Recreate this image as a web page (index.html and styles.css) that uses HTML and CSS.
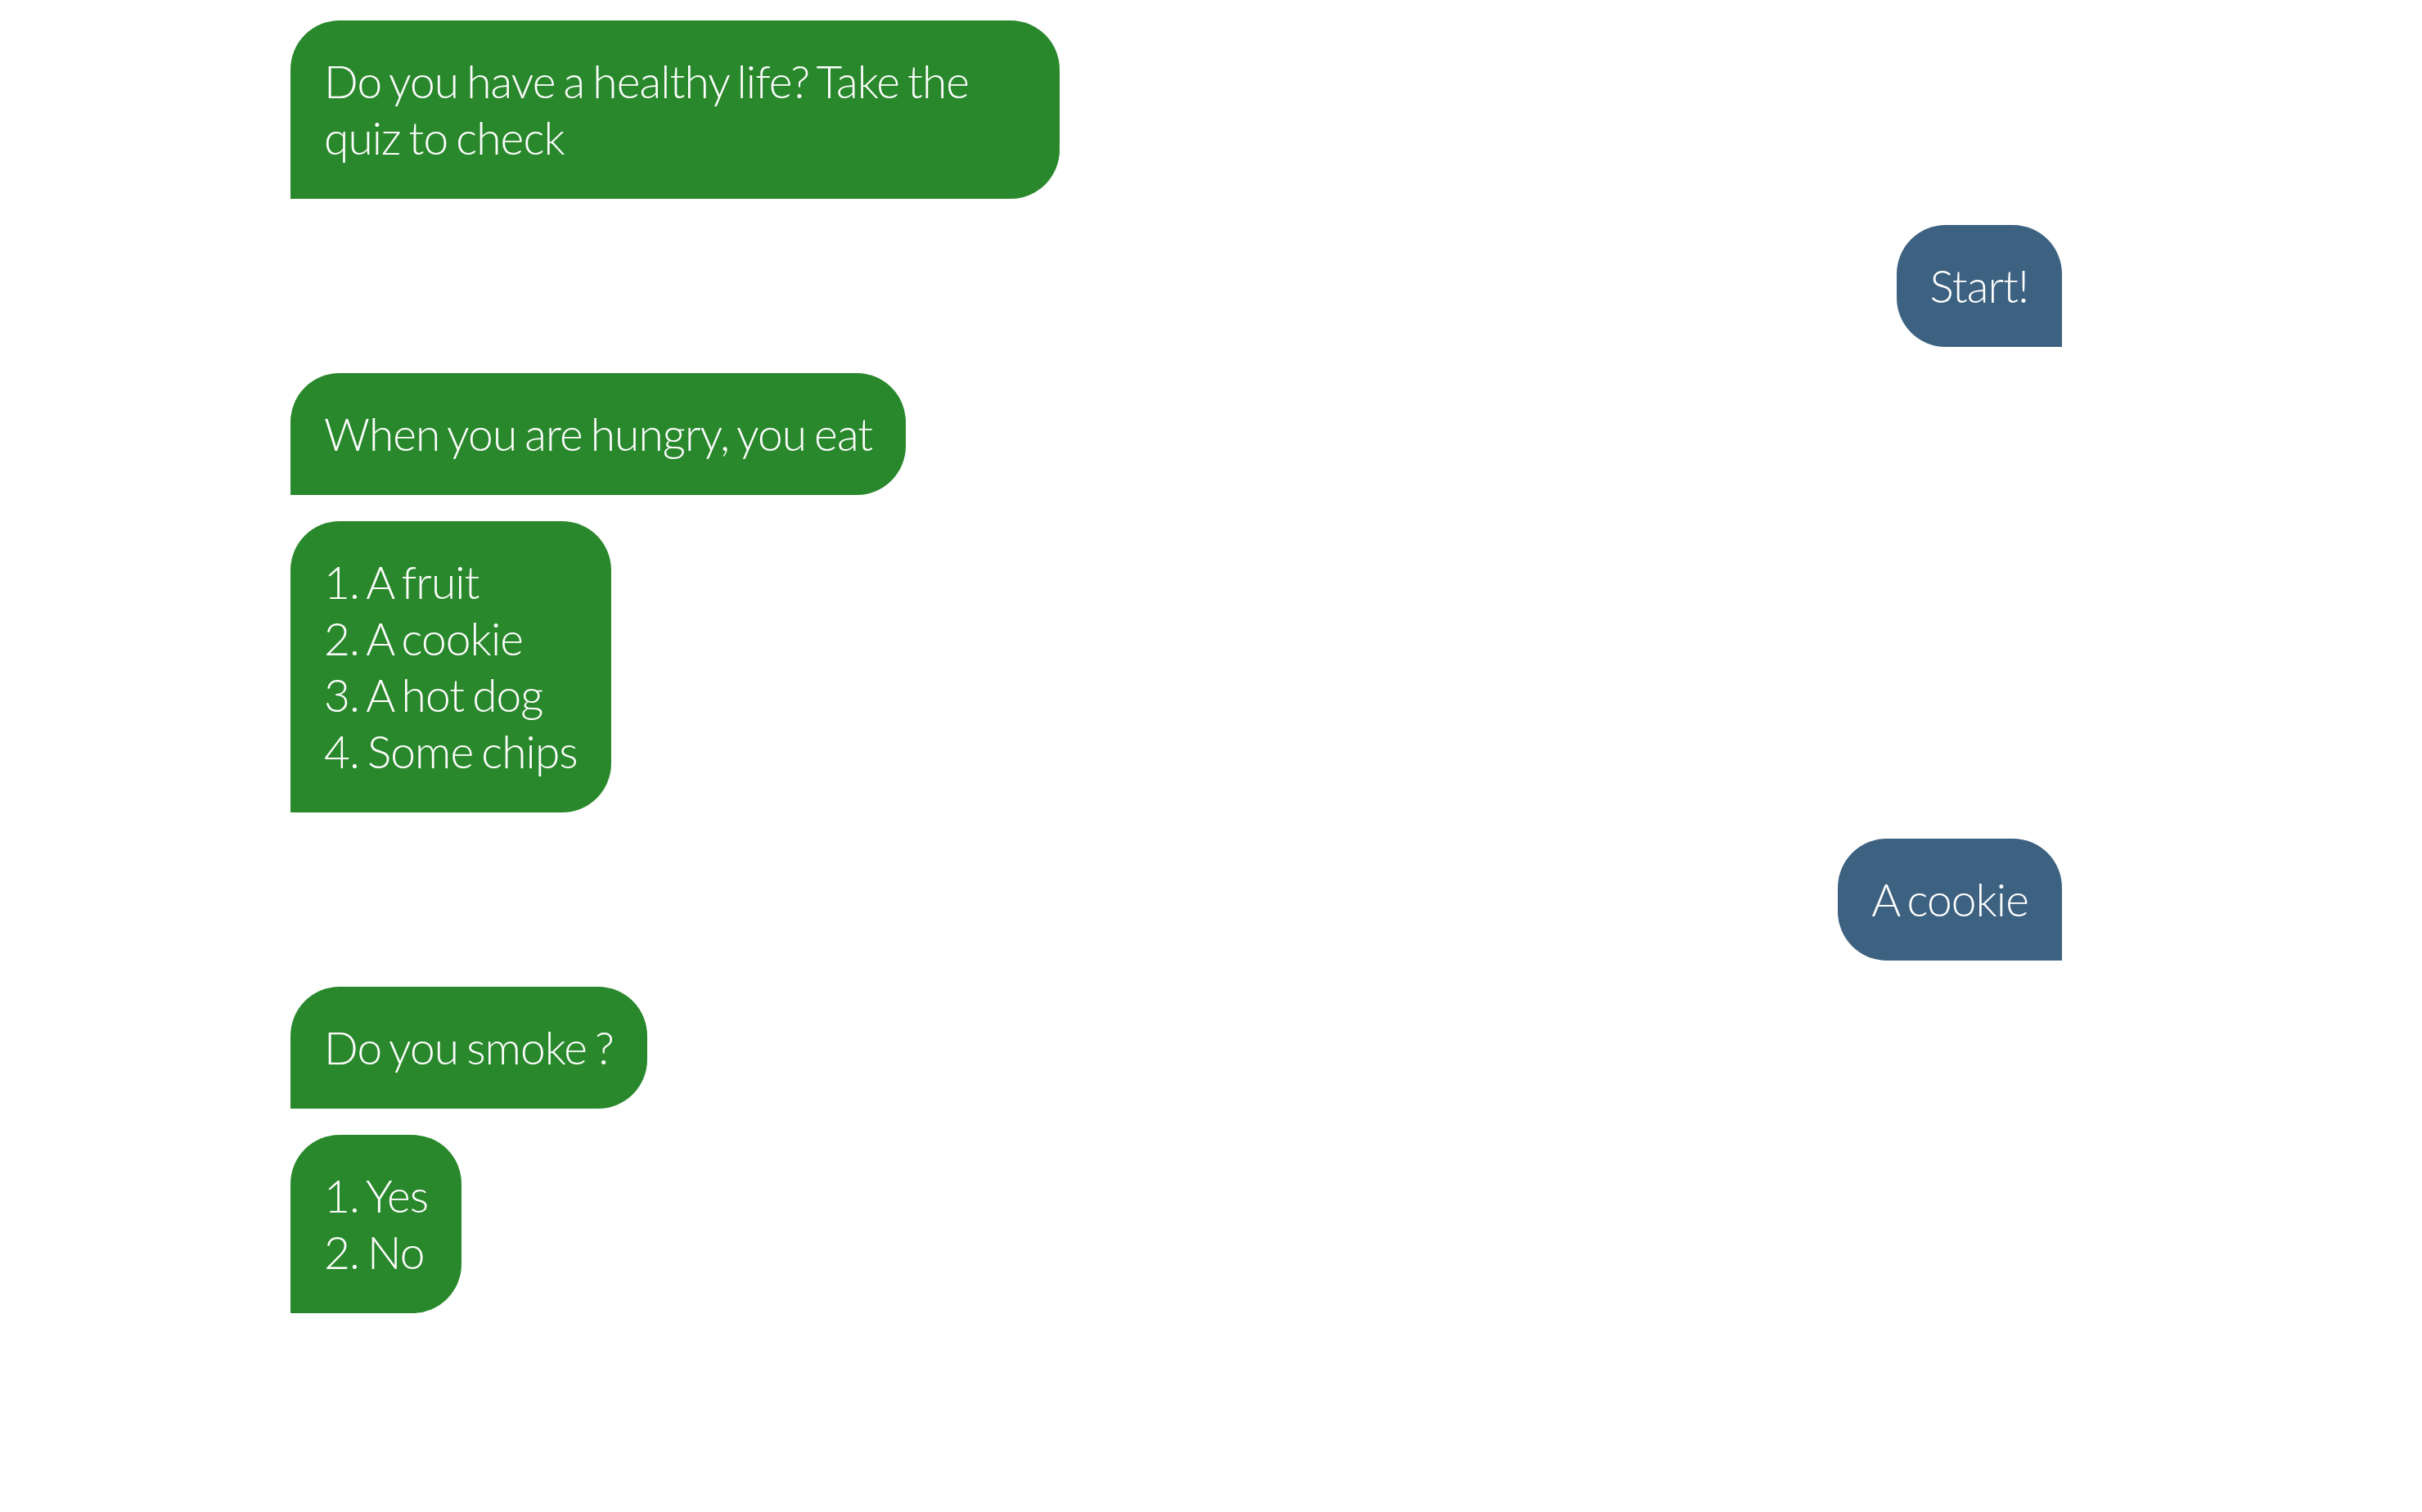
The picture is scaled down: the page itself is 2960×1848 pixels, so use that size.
FILE: index.html
```html
<!DOCTYPE html>
<html lang="en">
<head>
<meta charset="utf-8">
<title>Healthy life quiz</title>
<link rel="stylesheet" href="styles.css">
</head>
<body>
<main class="chat">
  <div class="msg bot">Do you have a healthy life? Take the quiz to check</div>
  <div class="msg user">Start!</div>
  <div class="msg bot">When you are hungry, you eat</div>
  <div class="msg bot">
    <div>1. A fruit</div>
    <div>2. A cookie</div>
    <div>3. A hot dog</div>
    <div>4. Some chips</div>
  </div>
  <div class="msg user">A cookie</div>
  <div class="msg bot">Do you smoke ?</div>
  <div class="msg bot">
    <div>1. Yes</div>
    <div>2. No</div>
  </div>
</main>
</body>
</html>
```

FILE: styles.css
```css
html, body {
  margin: 0;
  padding: 0;
  background: #ffffff;
}

.chat {
  display: flex;
  flex-direction: column;
  gap: 32px;
  padding: 25px 440px 40px 355px;
  font-family: "Lato", "Open Sans", sans-serif;
  font-weight: 300;
  font-size: 55px;
  letter-spacing: -0.9px;
  word-spacing: -4px;
  line-height: 69px;
  color: #ffffff;
}

.msg {
  box-sizing: border-box;
  max-width: 940px;
  padding: 40px 41px;
}

.bot {
  align-self: flex-start;
  background: #2a882c;
  border-radius: 60px 60px 60px 0;
}

.user {
  align-self: flex-end;
  background: #3d6181;
  border-radius: 60px 60px 0 60px;
}
```
